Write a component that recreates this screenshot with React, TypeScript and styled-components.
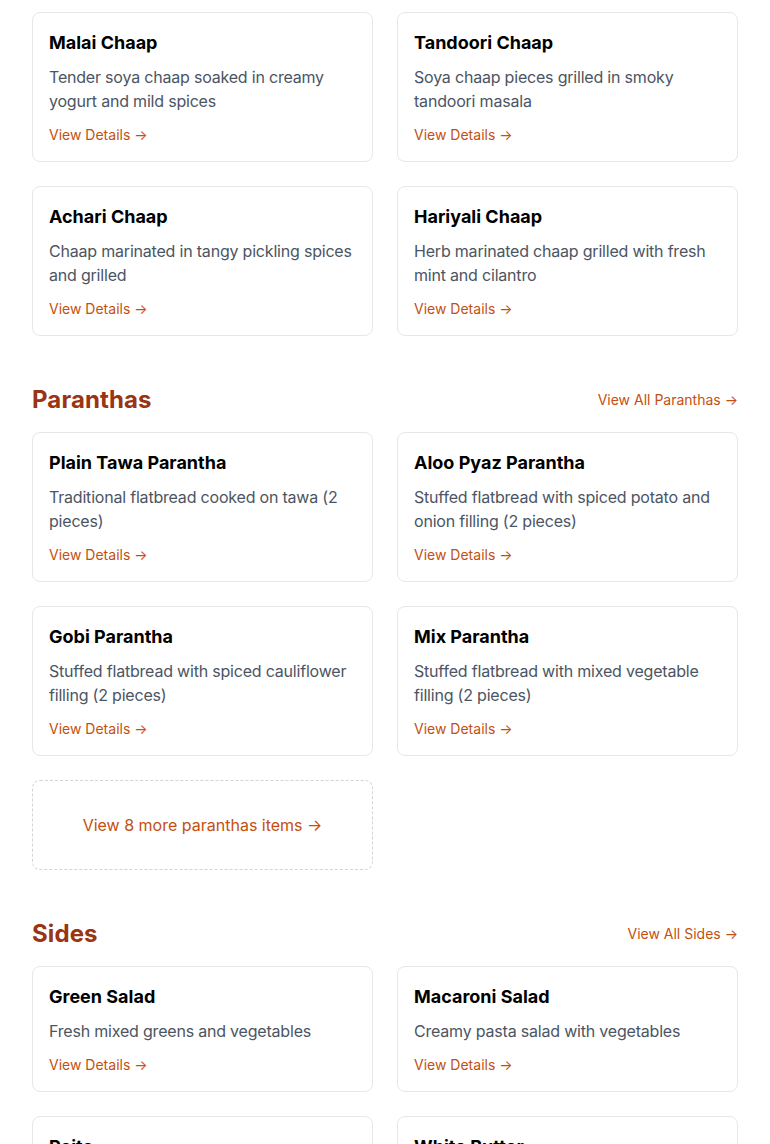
import React from "react";
import styled, { createGlobalStyle } from "styled-components";

const Global = createGlobalStyle`
  html, body { margin: 0; padding: 0; background: #ffffff; }
  body { font-family: Inter, "Noto Sans", "Liberation Sans", sans-serif; color: #111827; }
  * { box-sizing: border-box; }
`;

const Page = styled.main`
  padding: 12px 32px 0;
  display: flex;
  flex-direction: column;
  gap: 48px;
`;

const Section = styled.section`
  display: flex;
  flex-direction: column;
  gap: 16px;
`;

const SectionHeader = styled.div`
  display: flex;
  align-items: center;
  justify-content: space-between;
`;

const SectionTitle = styled.h2`
  margin: 0;
  font-size: 24px;
  line-height: 32px;
  font-weight: 700;
  letter-spacing: 0.1px;
  color: #9a3412;
`;

const ViewAll = styled.a`
  font-size: 14px;
  line-height: 20px;
  color: #c4500f;
  text-decoration: none;
`;

const Grid = styled.div`
  display: grid;
  grid-template-columns: 1fr 1fr;
  gap: 24px;
`;

const Card = styled.div`
  border: 1px solid #e5e7eb;
  border-radius: 8px;
  background: #fff;
  padding: 16px;
  display: flex;
  flex-direction: column;
`;

const CardTitle = styled.h3`
  margin: 0 0 8px;
  font-size: 18px;
  line-height: 28px;
  font-weight: 700;
  color: #000;
`;

const CardDesc = styled.p`
  margin: 0 0 12px;
  font-size: 16px;
  line-height: 24px;
  letter-spacing: -0.2px;
  color: #4b5563;
`;

const CardLink = styled.a`
  font-size: 14px;
  line-height: 20px;
  color: #c4500f;
  text-decoration: none;
`;

const MoreCard = styled.a`
  border: 1px dashed #d1d5db;
  border-radius: 8px;
  height: 90px;
  display: flex;
  align-items: center;
  justify-content: center;
  font-size: 16px;
  line-height: 24px;
  color: #c4500f;
  text-decoration: none;
`;

type Item = { name: string; desc: string };

const chaap: Item[] = [
  { name: "Malai Chaap", desc: "Tender soya chaap soaked in creamy yogurt and mild spices" },
  { name: "Tandoori Chaap", desc: "Soya chaap pieces grilled in smoky tandoori masala" },
  { name: "Achari Chaap", desc: "Chaap marinated in tangy pickling spices and grilled" },
  { name: "Hariyali Chaap", desc: "Herb marinated chaap grilled with fresh mint and cilantro" },
];

const paranthas: Item[] = [
  { name: "Plain Tawa Parantha", desc: "Traditional flatbread cooked on tawa (2 pieces)" },
  { name: "Aloo Pyaz Parantha", desc: "Stuffed flatbread with spiced potato and onion filling (2 pieces)" },
  { name: "Gobi Parantha", desc: "Stuffed flatbread with spiced cauliflower filling (2 pieces)" },
  { name: "Mix Parantha", desc: "Stuffed flatbread with mixed vegetable filling (2 pieces)" },
];

const sides: Item[] = [
  { name: "Green Salad", desc: "Fresh mixed greens and vegetables" },
  { name: "Macaroni Salad", desc: "Creamy pasta salad with vegetables" },
  { name: "Raita", desc: "Chilled yogurt with cucumber and spices" },
  { name: "White Butter", desc: "Fresh homemade white butter" },
];

const ItemCard = ({ item }: { item: Item }) => (
  <Card>
    <CardTitle>{item.name}</CardTitle>
    <CardDesc>{item.desc}</CardDesc>
    <CardLink href="#">View Details →</CardLink>
  </Card>
);

export default function App() {
  return (
    <>
      <Global />
      <Page>
        <Grid>
          {chaap.map((i) => (
            <ItemCard key={i.name} item={i} />
          ))}
        </Grid>
        <Section>
          <SectionHeader>
            <SectionTitle>Paranthas</SectionTitle>
            <ViewAll href="#">View All Paranthas →</ViewAll>
          </SectionHeader>
          <Grid>
            {paranthas.map((i) => (
              <ItemCard key={i.name} item={i} />
            ))}
            <MoreCard href="#">View 8 more paranthas items →</MoreCard>
          </Grid>
        </Section>
        <Section>
          <SectionHeader>
            <SectionTitle>Sides</SectionTitle>
            <ViewAll href="#">View All Sides →</ViewAll>
          </SectionHeader>
          <Grid>
            {sides.map((i) => (
              <ItemCard key={i.name} item={i} />
            ))}
          </Grid>
        </Section>
      </Page>
    </>
  );
}
